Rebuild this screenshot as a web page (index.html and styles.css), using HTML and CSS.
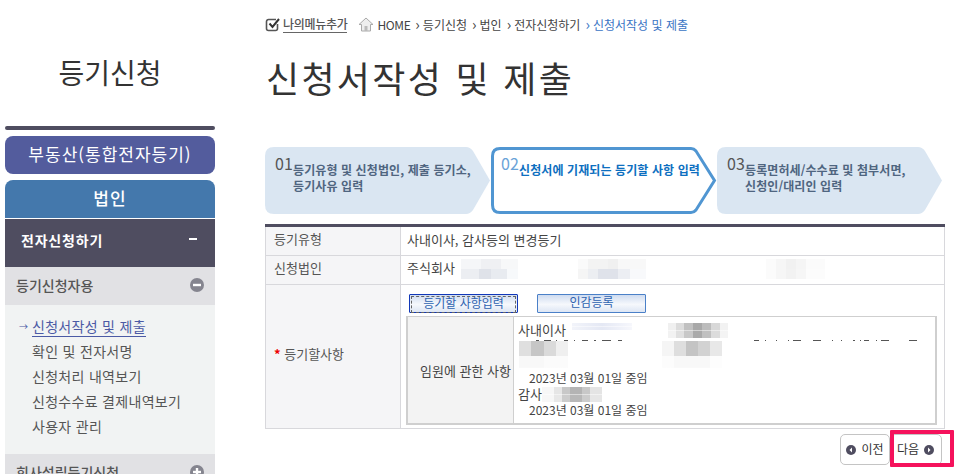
FILE: index.html
```html
<!DOCTYPE html>
<html lang="ko">
<head>
    <meta charset="UTF-8">
    <title>신청서작성 및 제출</title>
    <link rel="stylesheet" href="styles.css">
</head>
<body>
    <div class="page">
        <!-- Left menu -->
        <div class="side">
            <h2 class="side-title">등기신청</h2>
            <div class="side-bar"></div>
            <a class="tab tab-estate">부동산(통합전자등기)</a>
            <a class="tab tab-corp">법인</a>
            <div class="menu-head"><span>전자신청하기</span><i class="dash"></i></div>
            <div class="sub-head">
                <span>등기신청자용</span>
                <svg class="round" width="14" height="14" viewBox="0 0 14 14"><circle cx="7" cy="7" r="7" fill="#85858f"/><rect x="3" y="5.8" width="8" height="2.4" fill="#fff"/></svg>
            </div>
            <ul class="sub-list">
                <li class="on"><span class="arrow">→</span><a>신청서작성 및 제출</a></li>
                <li><a>확인 및 전자서명</a></li>
                <li><a>신청처리 내역보기</a></li>
                <li><a>신청수수료 결제내역보기</a></li>
                <li><a>사용자 관리</a></li>
            </ul>
            <div class="sub-head">
                <span>회사설립등기신청</span>
                <svg class="round" width="14" height="14" viewBox="0 0 14 14"><circle cx="7" cy="7" r="7" fill="#85858f"/><rect x="3" y="5.8" width="8" height="2.4" fill="#fff"/><rect x="5.8" y="3" width="2.4" height="8" fill="#fff"/></svg>
            </div>
        </div>

        <!-- Main content -->
        <div class="main">
            <div class="crumbs">
                <a class="my-menu">
                    <svg width="15" height="15" viewBox="0 0 15 15"><path d="M12.5 7v4.5a2 2 0 0 1-2 2h-7a2 2 0 0 1-2-2v-7a2 2 0 0 1 2-2H11" fill="none" stroke="#555" stroke-width="1.6"/><path d="M4.5 6.5l3 3.5L14 2" fill="none" stroke="#333" stroke-width="2"/></svg>
                    <span>나의메뉴추가</span>
                </a>
                <svg class="home" width="16" height="15" viewBox="0 0 16 15"><path d="M8 1L1 7.500h2.500V14h9V7.500H15z" fill="#eee" stroke="#aaa"/><rect x="6.500" y="9" width="3" height="5" fill="#bbb"/></svg>
                <span class="crumb crumb-home">HOME</span>
                <span class="crumb sep">등기신청</span>
                <span class="crumb sep">법인</span>
                <span class="crumb sep">전자신청하기</span>
                <span class="crumb sep now">신청서작성 및 제출</span>
            </div>
            <h1 class="page-title">신청서작성 및 제출</h1>

            <div class="steps">
                <div class="step">
                    <svg class="step-bg" width="226" height="67" viewBox="0 0 226 67"><path d="M9 0H201Q205 0 208 4L225 33.500L208 63Q205 67 201 67H9Q0 67 0 58V9Q0 0 9 0Z" fill="#dae6f2"/></svg>
                    <em>01</em>
                    <p>등기유형 및 신청법인, 제출 등기소,<br>등기사유 입력</p>
                </div>
                <div class="step step-on">
                    <svg class="step-bg" width="226" height="67" viewBox="0 0 226 67"><path d="M9 1.500H200Q203 1.500 205 4L223.500 33.500L205 63Q203 65.500 200 65.500H9Q1.500 65.500 1.500 58V9Q1.500 1.500 9 1.500Z" fill="#fff" stroke="#5096d2" stroke-width="3"/></svg>
                    <em>02</em>
                    <p>신청서에 기재되는 등기할 사항 입력</p>
                </div>
                <div class="step">
                    <svg class="step-bg" width="226" height="67" viewBox="0 0 226 67"><path d="M9 0H201Q205 0 208 4L225 33.500L208 63Q205 67 201 67H9Q0 67 0 58V9Q0 0 9 0Z" fill="#dae6f2"/></svg>
                    <em>03</em>
                    <p>등록면허세/수수료 및 첨부서면,<br>신청인/대리인 입력</p>
                </div>
            </div>

            <table class="form-table">
                <tr class="row-a">
                    <th>등기유형</th>
                    <td>사내이사, 감사등의 변경등기</td>
                </tr>
                <tr class="row-b">
                    <th>신청법인</th>
                    <td>주식회사 <span class="mosaic mosaic-a"></span><span class="mosaic mosaic-b"></span><span class="mosaic mosaic-c"></span></td>
                </tr>
                <tr>
                    <th class="th-mid"><b class="star">*</b> 등기할사항</th>
                    <td class="td-box">
                        <div class="btn-row">
                            <a class="btn btn-focus"><span>등기할 사항입력</span></a>
                            <a class="btn">인감등록</a>
                        </div>
                        <table class="inner-table">
                            <tr>
                                <th>임원에 관한 사항</th>
                                <td>
                                    <div class="name-row">사내이사<span class="mosaic mosaic-d"></span><span class="mosaic mosaic-e"></span></div>
                                    <div class="masked">
                                        <svg class="strip" width="410" height="1" viewBox="0 0 410 1"><path d="M18 0h3M26 0h7M38 0h1M46 0h4M56 0h1M64 0h6M76 0h2M84 0h9M100 0h4M236 0h5M247 0h1M258 0h1M270 0h1M275 0h8M295 0h8M314 0h1M323 0h1M335 0h2M342 0h1M346 0h5M358 0h1M363 0h8M391 0h8M411 0h1" stroke="#555" stroke-width="2"/></svg>
                                        <span class="mosaic mosaic-f"></span><span class="mosaic mosaic-g"></span>
                                    </div>
                                    <div class="date">2023년 03월 01일 중임</div>
                                    <div class="name-row name-low">감사<span class="mosaic mosaic-h"></span></div>
                                    <div class="date">2023년 03월 01일 중임</div>
                                </td>
                            </tr>
                        </table>
                    </td>
                </tr>
            </table>

            <div class="pager">
                <a class="page-btn">
                    <svg width="10" height="10" viewBox="0 0 10 10"><circle cx="5" cy="5" r="5" fill="#4f4d60"/><path d="M6 2.500L3.500 5L6 7.500z" fill="#fff"/></svg>
                    이전
                </a>
                <a class="page-btn page-next">
                    다음
                    <svg width="10" height="10" viewBox="0 0 10 10"><circle cx="5" cy="5" r="5" fill="#4f4d60"/><path d="M4 2.500L6.500 5L4 7.500z" fill="#fff"/></svg>
                    <i class="mark"></i>
                </a>
            </div>
        </div>
    </div>
</body>
</html>
```

FILE: styles.css
```css
html, body {
    margin: 0;
    height: 474px;
    overflow: hidden;
    background: #fff;
}

body {
    font-family: "Noto Sans CJK KR", "Liberation Sans", sans-serif;
    font-size: 12px;
    color: #444;
}

a {
    text-decoration: none;
    color: inherit;
}

.page {
    display: flex;
    padding-left: 5px;
}

/* Left menu */
.side {
    width: 210px;
    flex: none;
}

.side-title {
    margin: 0;
    height: 126px;
    padding-top: 54px;
    box-sizing: border-box;
    text-align: center;
    font-size: 28px;
    line-height: 36px;
    font-weight: 400;
    color: #333;
}

.side-bar {
    height: 4px;
    background: #4f4d60;
    border-radius: 2px;
    margin-bottom: 6px;
}

.tab {
    display: block;
    height: 38px;
    line-height: 36px;
    text-align: center;
    color: #fff;
    font-size: 17px;
    letter-spacing: 1px;
    border-radius: 8px;
}

.tab-estate {
    background: #535c9d;
    margin-bottom: 6px;
}

.tab-corp {
    background: #4478ac;
    border-radius: 8px 8px 0 0;
    margin-bottom: 1px;
    font-weight: 500;
}

.menu-head {
    height: 48px;
    box-sizing: border-box;
    padding: 10px 16px 0 16px;
    background: #4f4d60;
    color: #fff;
    font-size: 14px;
    font-weight: 700;
    letter-spacing: 0.800px;
    line-height: 22px;
    display: flex;
    justify-content: space-between;
}

.dash {
    width: 8px;
    height: 2px;
    background: #fff;
    margin: 9px 2px 0 0;
}

.sub-head {
    height: 38px;
    box-sizing: border-box;
    padding: 0 11px 3px 11px;
    background: #e1e1e4;
    color: #555;
    font-size: 14px;
    font-weight: 500;
    display: flex;
    align-items: center;
    justify-content: space-between;
}

.sub-list {
    list-style: none;
    margin: 0;
    padding: 9px 0 0 0;
    height: 149px;
    box-sizing: border-box;
    background: #f1f3f3;
    font-size: 14px;
    letter-spacing: 0.300px;
    color: #555;
}

.sub-list li {
    height: 25px;
    line-height: 25px;
    padding-left: 27px;
    position: relative;
}

.sub-list .on a {
    color: #4b5aa5;
    border-bottom: 1px solid #4b5aa5;
}

.arrow {
    position: absolute;
    left: 14px;
    color: #4b5aa5;
    font-size: 9px;
}

/* Main column */
.main {
    width: 680px;
    margin-left: 50px;
    flex: none;
}

.crumbs {
    height: 44px;
    box-sizing: border-box;
    padding-top: 16px;
    display: flex;
    align-items: flex-start;
    line-height: 18px;
    color: #444;
}

.my-menu {
    display: flex;
    align-items: center;
    margin-right: 11px;
    font-weight: 500;
    color: #555;
    letter-spacing: -0.300px;
}

.my-menu span {
    border-bottom: 1px solid #666;
    line-height: 16px;
    margin-left: 3px;
}

.home {
    margin: 1px 3px 0 0;
}

.crumb {
    margin-right: 5px;
}

.crumb-home {
    letter-spacing: -0.400px;
}

.sep::before {
    content: "›";
    margin-right: 3px;
    font-size: 15px;
    line-height: 16px;
}

.now {
    color: #3a74c4;
}

.page-title {
    margin: 0;
    height: 103px;
    padding-left: 1px;
    font-size: 36px;
    line-height: 66px;
    font-weight: 400;
    letter-spacing: 2.300px;
    color: #333;
}

/* Steps */
.steps {
    display: flex;
    height: 67px;
    margin-bottom: 10px;
}

.step {
    position: relative;
    width: 226px;
    flex: none;
    height: 67px;
}

.step-bg {
    position: absolute;
    left: 0;
    top: 0;
}

.step em {
    position: absolute;
    left: 10px;
    top: 6px;
    font-style: normal;
    font-size: 16px;
    line-height: 20px;
    color: #555;
}

.step p {
    position: relative;
    margin: 0;
    padding: 15px 0 0 28px;
    font-size: 12px;
    letter-spacing: 0.100px;
    line-height: 16px;
    font-weight: 700;
    color: #4f6580;
}

.step-on em {
    color: #6aa3d8;
}

.step-on p {
    color: #0d6fc0;
}

/* Form table */
.form-table {
    width: 680px;
    border-collapse: collapse;
    border-top: 3px solid #4f4d60;
    border-bottom: 1px solid #4f4d60;
    font-size: 13px;
}

.form-table > tbody > tr > th,
.form-table > tbody > tr > td {
    border: 1px solid #d8d8dc;
    border-top-width: 0;
    text-align: left;
    font-weight: 400;
    padding: 0 0 3px 6px;
    white-space: nowrap;
}

.form-table > tbody > tr > th {
    width: 127px;
    padding: 0 0 6px 8px;
    background: #f5f5f7;
    color: #555;
    border-left: 1px solid #d8d8dc;
}

.row-a {
    height: 30px;
}

.row-b {
    height: 29px;
}

.form-table > tbody > tr > td.td-box {
    padding: 9px 7px 3px 5px;
    height: 143px;
    box-sizing: border-box;
    vertical-align: top;
}

.star {
    color: #e00;
    font-weight: 700;
}

.btn-row {
    display: flex;
    gap: 19px;
    padding-left: 3px;
    margin-bottom: 3px;
    font-size: 12px;
}

.btn {
    width: 109px;
    height: 19px;
    box-sizing: border-box;
    border: 1px solid #4a80c8;
    background: linear-gradient(#cfdcf0, #f6f8fc 55%, #dde6f4);
    color: #2d62b0;
    text-align: center;
    line-height: 14px;
    border-radius: 1px;
}

.btn-focus {
    border-color: #1238b8;
    padding: 1px;
}

.btn-focus span {
    display: block;
    height: 15px;
    border: 1px dashed #666;
    line-height: 11px;
}

.inner-table {
    width: 531px;
    height: 109px;
    border-collapse: collapse;
    border: 2px solid #cfcfcf;
    border-top-width: 1px;
    font-size: 13px;
}

.inner-table th {
    width: 103px;
    background: #f3f3f3;
    border-right: 1px solid #cfcfcf;
    font-weight: 400;
    text-align: right;
    padding: 0 2px 0 0;
    color: #444;
}

.inner-table td {
    padding: 3px 0 0 4px;
    vertical-align: top;
    line-height: 20px;
    color: #444;
}

.name-row {
    display: flex;
    align-items: flex-start;
    height: 20px;
}

.name-low {
    height: 16px;
    line-height: 16px;
}

.masked {
    position: relative;
    display: flex;
    height: 30px;
    padding-top: 1px;
    box-sizing: border-box;
}

.strip {
    position: absolute;
    left: 0;
    top: 0;
}

.date {
    padding-left: 11px;
    font-size: 12px;
    line-height: 16px;
}

/* Mosaics hiding personal data, two rows of squares each */
.mosaic {
    display: inline-block;
    flex: none;
    background-repeat: no-repeat;
    background-size: 100% 50%;
    background-position: top, bottom;
}

.mosaic-a {
    width: 57px;
    height: 20px;
    margin-left: 3px;
    vertical-align: middle;
    background-image:
        linear-gradient(90deg, #f5f6f8 0 20px, #eff0f3 0 40px, #f7f8f9 0),
        linear-gradient(90deg, #eceef2 0 18px, #dfe2e9 0 30px, #e8ebf0 0 46px, #f7f9fb 0);
}

.mosaic-b {
    width: 68px;
    height: 20px;
    margin-left: 60px;
    vertical-align: middle;
    background-image:
        linear-gradient(90deg, #fafafa 0 10px, #f3f3f3 0 30px, #f0f0f0 0 40px, #f8f8f8 0),
        linear-gradient(90deg, #f5f5f5 0 10px, #eceef2 0 20px, #dfe2ea 0 40px, #eceef3 0 52px, #f8f9fb 0);
}

.mosaic-c {
    width: 59px;
    height: 20px;
    margin-left: 120px;
    vertical-align: middle;
    background-image:
        linear-gradient(90deg, #fbfbfb 0 10px, #f6f6f6 0 20px, #f1f1f1 0 30px, #f5f5f5 0 40px, #fbfbfb 0),
        linear-gradient(90deg, #fbfbfb 0 10px, #f6f6f6 0 20px, #f2f2f2 0 30px, #f6f6f6 0 40px, #fcfcfc 0);
}

.mosaic-d {
    width: 60px;
    height: 7px;
    margin: 3px 0 0 6px;
    background-image:
        linear-gradient(90deg, #f2f4fa, #e4e8f4 50%, #f6f7fc),
        linear-gradient(90deg, #f2f4fa, #e4e8f4 50%, #f6f7fc);
}

.mosaic-e {
    width: 60px;
    height: 15px;
    margin: 3px 0 0 36px;
    background-image:
        linear-gradient(90deg, #f0f0f0 0 8px, #dcdcdc 0 16px, #c0c0c0 0 25px, #a8a8a8 0 34px, #bcbcbc 0 43px, #d8d8d8 0 52px, #f2f2f2 0),
        linear-gradient(90deg, #f2f2f2 0 8px, #e0e0e0 0 16px, #c8c8c8 0 25px, #aaa 0 34px, #c0c0c0 0 43px, #dcdcdc 0 52px, #f4f4f4 0);
}

.mosaic-f,
.mosaic-g {
    height: 27px;
    background-size: 100% 56%, 100% 44%;
}

.mosaic-f {
    width: 49px;
    margin-left: 1px;
    background-image:
        linear-gradient(90deg, #dfdfdf 0 12px, #c6c6c6 0 25px, #dadada 0 37px, #efefef 0),
        linear-gradient(90deg, #f8f8f8 0 25px, #fbfbfb 0);
}

.mosaic-g {
    width: 60px;
    margin-left: 94px;
    background-image:
        linear-gradient(90deg, #f5f5f5 0 12px, #dedede 0 24px, #c4c4c4 0 36px, #d2d2d2 0 48px, #e8e8e8 0),
        linear-gradient(90deg, #fcfcfc 0 12px, #f8f8f8 0 48px, #fdfdfd 0);
}

.mosaic-h {
    width: 60px;
    height: 15px;
    margin-top: 1px;
    background-image:
        linear-gradient(90deg, #f7f7f7 0 12px, #e6e6e6 0 20px, #c8c8c8 0 28px, #b4b4b4 0 40px, #c8c8c8 0 48px, #e4e4e4 0),
        linear-gradient(90deg, #f7f7f7 0 12px, #e8e8e8 0 20px, #cccccc 0 28px, #b8b8b8 0 40px, #cccccc 0 48px, #e6e6e6 0);
}

/* Prev / next */
.pager {
    display: flex;
    justify-content: flex-end;
    padding: 5px 3px 0 0;
}

.page-btn {
    position: relative;
    width: 50px;
    height: 31px;
    box-sizing: border-box;
    border: 1px solid #c4c4c4;
    border-radius: 5px;
    display: flex;
    align-items: center;
    justify-content: center;
    gap: 5px;
    padding-bottom: 2px;
    color: #333;
    background: #fff;
}

.page-next {
    width: 52px;
    justify-content: flex-start;
    padding-left: 6px;
}

.page-btn svg {
    margin-top: 2px;
}

/* The red highlight drawn over the next button */
.mark {
    position: absolute;
    left: -1px;
    top: -5px;
    width: 64px;
    height: 37px;
    box-sizing: border-box;
    border: 4px solid #f5125c;
    border-radius: 1px;
}
```
